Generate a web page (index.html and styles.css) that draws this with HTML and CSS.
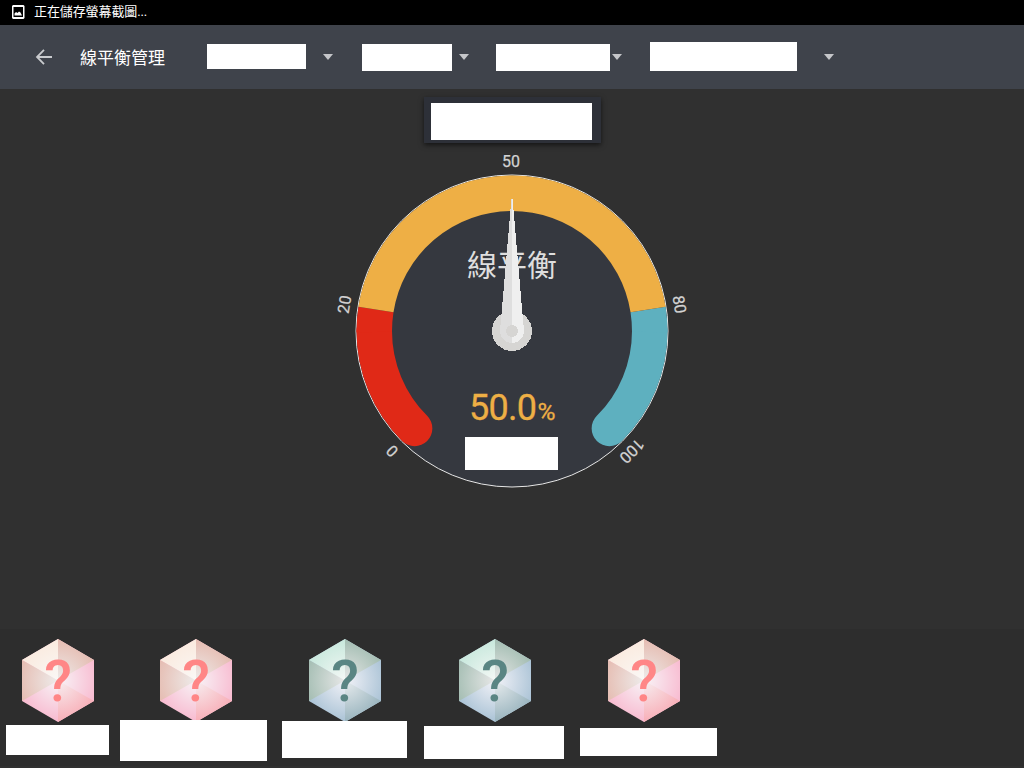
FILE: index.html
```html
<!DOCTYPE html>
<html lang="zh-Hant">
<head>
<meta charset="utf-8">
<title>線平衡管理</title>
<link rel="stylesheet" href="styles.css">
</head>
<body>
<div class="status-bar">
  <svg class="status-icon" width="12" height="14" viewBox="0 0 12 14"><path fill="#fff" fill-rule="evenodd" d="M1 0h10.500L12.500 1v12l-1 1H1l-1-1V1zM1.500 2v10h9.500V2zM2.500 10.500V8.500l1.500-1.500 1.500 1L7 6.500l1.500 1 1.500 3z"/></svg>
  <span class="status-text">正在儲存螢幕截圖...</span>
</div>
<header class="app-bar">
  <svg class="back" width="18" height="18" viewBox="0 0 18 18"><path d="M17 9H2.500M9 1.800L2 9 9 16.200" fill="none" stroke="#c9cbce" stroke-width="1.8"/></svg>
  <h1 class="title">線平衡管理</h1>
  <div class="filter filter-a"></div><i class="caret caret-a"></i>
  <div class="filter filter-b"></div><i class="caret caret-b"></i>
  <div class="filter filter-c"></div><i class="caret caret-c"></i>
  <div class="filter filter-d"></div><i class="caret caret-d"></i>
</header>
<main class="content">
  <div class="card"><div class="card-label"></div></div>
  <svg class="gauge" width="380" height="350" viewBox="-190 -181 380 350">
    <circle r="156" fill="#35383f" stroke="#e6e6e6" stroke-width="1"/>
    <g fill="none" stroke-width="35.5">
      <path class="cap" stroke="#e02917" d="M-97.4 97.4A137.75 137.75 0 0 1 -137.75 0"/>
      <path class="cap" stroke="#5eb0bf" d="M97.4 97.4A137.75 137.75 0 0 0 137.75 0"/>
      <path stroke="#e02917" d="M-137.75 1A137.75 137.75 0 0 1 -136.06 -21.55"/>
      <path stroke="#5eb0bf" d="M137.75 1A137.75 137.75 0 0 0 136.06 -21.55"/>
      <path stroke="#eeaf45" d="M-136.06 -21.55A137.75 137.75 0 0 1 136.06 -21.55"/>
    </g>
    <g class="ticks">
      <text transform="rotate(-135)" y="-164">0</text>
      <text transform="rotate(-81)" y="-164">20</text>
      <text x="-1" y="-164">50</text>
      <text transform="rotate(81)" y="-164">80</text>
      <text transform="rotate(135)" y="-164">100</text>
    </g>
    <text class="gauge-title" x="0" y="-55.500">線平衡</text>
    <g shape-rendering="crispEdges">
      <circle r="20" fill="#d6d5d3"/>
      <path fill="#dedede" d="M-.6 -132H0V12A12 12 0 0 1 -12 0L-10.5 -17z"/>
      <path fill="#efefef" d="M0 -132H.6L10.500 -17L12 0A12 12 0 0 1 0 12z"/>
      <circle r="6" fill="#d6d5d3"/>
    </g>
    <text class="gauge-value" x="-43" y="89" textLength="68">50.0</text>
    <text class="gauge-value gauge-unit" x="25.500" y="89" textLength="18" lengthAdjust="spacingAndGlyphs">%</text>
    <rect x="-47" y="106" width="93" height="33" fill="#fff"/>
  </svg>
</main>
<footer class="stations">
  <svg width="0" height="0" class="defs">
    <defs>
      <radialGradient id="r1" gradientUnits="userSpaceOnUse" cx="36" cy="41.5" r="42"><stop offset="0" stop-color="#faf8f6"/><stop offset="1" stop-color="#faeade"/></radialGradient>
      <radialGradient id="r2" gradientUnits="userSpaceOnUse" cx="36" cy="41.5" r="42"><stop offset="0" stop-color="#eeeceb"/><stop offset="1" stop-color="#e5bbb0"/></radialGradient>
      <radialGradient id="r3" gradientUnits="userSpaceOnUse" cx="36" cy="41.5" r="42"><stop offset="0" stop-color="#f8f4f7"/><stop offset="1" stop-color="#f8b9cf"/></radialGradient>
      <radialGradient id="r4" gradientUnits="userSpaceOnUse" cx="36" cy="41.5" r="42"><stop offset="0" stop-color="#f7eff1"/><stop offset="1" stop-color="#f8adb6"/></radialGradient>
      <radialGradient id="g1" gradientUnits="userSpaceOnUse" cx="36" cy="41.5" r="42"><stop offset="0" stop-color="#f5f8f6"/><stop offset="1" stop-color="#c7e8dc"/></radialGradient>
      <radialGradient id="g2" gradientUnits="userSpaceOnUse" cx="36" cy="41.5" r="42"><stop offset="0" stop-color="#e8e8e8"/><stop offset="1" stop-color="#a2bcb1"/></radialGradient>
      <radialGradient id="g3" gradientUnits="userSpaceOnUse" cx="36" cy="41.5" r="42"><stop offset="0" stop-color="#f3f3f8"/><stop offset="1" stop-color="#a9c2d5"/></radialGradient>
      <radialGradient id="g4" gradientUnits="userSpaceOnUse" cx="36" cy="41.5" r="42"><stop offset="0" stop-color="#e9edef"/><stop offset="1" stop-color="#98b3bd"/></radialGradient>
      <g id="hex-red">
        <path fill="url(#r3)" d="M36 0L72 21V62L36 83L0 62V21z"/>
        <path fill="url(#r1)" d="M36 41.5V0L0 21z"/>
        <path fill="url(#r2)" d="M36 41.5V0L72 21zM36 41.5L0 21V62z"/>
        <path fill="url(#r4)" d="M36 41.5V83L72 62z"/>
        <text class="mark mark-red" x="36" y="62">?</text>
      </g>
      <g id="hex-green">
        <path fill="url(#g3)" d="M36 0L72 21V62L36 83L0 62V21z"/>
        <path fill="url(#g1)" d="M36 41.5V0L0 21z"/>
        <path fill="url(#g2)" d="M36 41.5V0L72 21zM36 41.5L0 21V62z"/>
        <path fill="url(#g4)" d="M36 41.5V83L72 62z"/>
        <text class="mark mark-green" x="36" y="62">?</text>
      </g>
    </defs>
  </svg>
  <div class="station s1"><svg class="hex" width="72" height="83"><use href="#hex-red"/></svg><div class="name"></div></div>
  <div class="station s2"><svg class="hex" width="72" height="83"><use href="#hex-red"/></svg><div class="name"></div></div>
  <div class="station s3"><svg class="hex" width="72" height="83"><use href="#hex-green"/></svg><div class="name"></div></div>
  <div class="station s4"><svg class="hex" width="72" height="83"><use href="#hex-green"/></svg><div class="name"></div></div>
  <div class="station s5"><svg class="hex" width="72" height="83"><use href="#hex-red"/></svg><div class="name"></div></div>
</footer>
</body>
</html>
```
FILE: styles.css
```css
* { box-sizing: border-box; }
body {
  margin: 0;
  width: 1024px;
  height: 768px;
  overflow: hidden;
  background: #303030;
  color: #fff;
  font-family: Roboto, "Noto Sans CJK TC", sans-serif;
  display: flex;
  flex-direction: column;
}
.status-bar {
  height: 25px;
  flex: none;
  background: #000;
  display: flex;
  align-items: center;
  padding-left: 12px;
}
.status-icon { margin: -2px 10px 0 0; overflow: visible; }
.status-text { font-size: 13px; line-height: 25px; margin-top: -2px; letter-spacing: -.1px; }
.app-bar {
  height: 64px;
  flex: none;
  background: #3f434b;
  display: flex;
  align-items: flex-start;
  padding-left: 35px;
}
.back { margin-top: 23px; }
.title {
  margin: 21px 0 0 27px;
  width: 127px;
  font-size: 17px;
  line-height: 24px;
  font-weight: 400;
}
.filter { background: #fff; flex: none; }
.filter-a { width: 99px; height: 25px; margin-top: 19px; }
.filter-b { width: 90px; height: 27px; margin-top: 19px; }
.filter-c { width: 114px; height: 27px; margin-top: 19px; }
.filter-d { width: 147px; height: 29px; margin-top: 17px; }
.caret {
  flex: none;
  margin-top: 29px;
  border: 5px solid transparent;
  border-top: 6px solid #c5c6c9;
  border-bottom: 0;
}
.caret-a { margin-left: 17px; margin-right: 29px; }
.caret-b { margin-left: 7px; margin-right: 27px; }
.caret-c { margin-left: 2px; margin-right: 28px; }
.caret-d { margin-left: 27px; }
.content {
  height: 540px;
  flex: none;
  display: flex;
  flex-direction: column;
  align-items: center;
}
.card {
  width: 177px;
  height: 46px;
  margin-top: 8px;
  padding: 6px 9px 3px 7px;
  background: #2d3038;
  box-shadow: 0 2px 5px rgba(0, 0, 0, .6);
}
.card-label { height: 37px; background: #fff; }
.gauge { margin-top: 7px; }
.cap { stroke-linecap: round; }
.ticks { font-size: 16px; fill: #d3d3d3; stroke: #d3d3d3; stroke-width: .25px; text-anchor: middle; }
.gauge-title { font-size: 30px; fill: #dedede; text-anchor: middle; }
.gauge-value { font-size: 36px; fill: #eeaf45; stroke: #eeaf45; stroke-width: .3px; }
.gauge-unit { font-size: 24px; }
.stations {
  height: 137px;
  flex: none;
  padding: 10px 0 0 6px;
  background: #2d2d2d;
  display: flex;
  align-items: flex-start;
}
.defs { position: absolute; }
.station { flex: none; }
.hex { display: block; }
.name { position: relative; background: #fff; }
.mark { font-size: 57px; font-weight: 500; text-anchor: middle; }
.mark-red { fill: #ff8686; }
.mark-green { fill: #5a8583; }
.s1 { width: 103px; margin-right: 11px; }
.s1 .hex { margin-left: 16px; }
.s1 .name { height: 30px; margin-top: 3px; }
.s2 { width: 147px; margin-right: 15px; }
.s2 .hex { margin-left: 40px; }
.s2 .name { height: 41px; margin-top: -2px; }
.s3 { width: 125px; margin-right: 17px; }
.s3 .hex { margin-left: 27px; }
.s3 .name { height: 37px; margin-top: -1px; }
.s4 { width: 140px; margin-right: 16px; }
.s4 .hex { margin-left: 35px; }
.s4 .name { height: 33px; margin-top: 4px; }
.s5 { width: 137px; }
.s5 .hex { margin-left: 28px; }
.s5 .name { height: 28px; margin-top: 6px; }
```
